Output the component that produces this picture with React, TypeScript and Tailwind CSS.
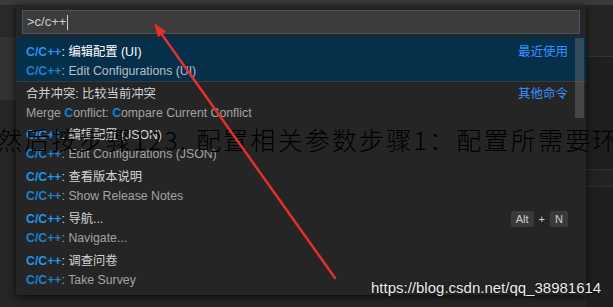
import React from "react";

type Seg = { t: string; hl?: boolean };

type Row = {
  main: Seg[];
  detail: Seg[];
  label?: string;
  keys?: string[];
  selected?: boolean;
  separator?: boolean;
};

const cpp = (rest: string): Seg[] => [{ t: "C/C++", hl: true }, { t: rest }];

const ROWS: Row[] = [
  { main: cpp(": 编辑配置 (UI)"), detail: cpp(": Edit Configurations (UI)"), label: "最近使用", selected: true },
  {
    main: [{ t: "合并冲突: 比较当前冲突" }],
    detail: [
      { t: "Merge " },
      { t: "C", hl: true },
      { t: "onflict: " },
      { t: "C", hl: true },
      { t: "ompare Current Conflict" },
    ],
    label: "其他命令",
    separator: true,
  },
  { main: cpp(": 编辑配置 (JSON)"), detail: cpp(": Edit Configurations (JSON)") },
  { main: cpp(": 查看版本说明"), detail: cpp(": Show Release Notes") },
  { main: cpp(": 导航..."), detail: cpp(": Navigate..."), keys: ["Alt", "N"] },
  { main: cpp(": 调查问卷"), detail: cpp(": Take Survey") },
];

function Line({ segs, className, hl }: { segs: Seg[]; className: string; hl: string }) {
  return (
    <div className={`leading-[19px] whitespace-nowrap ${className}`}>
      {segs.map((s, i) =>
        s.hl ? (
          <span key={i} className={`font-bold ${hl}`}>
            {s.t}
          </span>
        ) : (
          <span key={i}>{s.t}</span>
        )
      )}
    </div>
  );
}

function Item({ row, first }: { row: Row; first: boolean }) {
  return (
    <div
      className={`flex items-start justify-between pl-[10px] pr-[18px] ${
        first ? "h-[44px] pt-[6px]" : "h-[42px] pt-[3px]"
      } ${row.selected ? "bg-[#062f4a]" : ""} ${row.separator ? "border-t border-[#3a3a3a]" : ""}`}
    >
      <div className="flex flex-col text-[12.3px]">
        <Line
          segs={row.main}
          hl="text-[#1d97f0]"
          className={row.selected ? "text-white" : "text-[#d4d4d4]"}
        />
        <Line
          segs={row.detail}
          hl="text-[#1a82cc]"
          className={row.selected ? "text-[#b4bfc8]" : "text-[#a3a3a3]"}
        />
      </div>
      {row.label && <div className="text-[#3794ff] text-[12.5px] leading-[19px]">{row.label}</div>}
      {row.keys && (
        <div className="flex items-center gap-[5px] mt-[1px] text-[11px] text-[#cfcfcf]">
          <span className="bg-[#3a3a3a] px-[5px] leading-[16px] rounded-[2px]">{row.keys[0]}</span>
          <span>+</span>
          <span className="bg-[#3a3a3a] px-[5px] leading-[16px] rounded-[2px]">{row.keys[1]}</span>
        </div>
      )}
    </div>
  );
}

export default function App() {
  return (
    <div
      className="relative w-[613px] h-[307px] overflow-hidden bg-[#262626] flex flex-col"
      style={{ fontFamily: '"Liberation Sans", "Noto Sans CJK SC", sans-serif' }}
    >
      <div className="h-[5px] shrink-0 bg-[#3a3a3a]" />
      <div className="flex flex-1 min-h-0">
        {/* editor behind, left */}
        <div className="w-[16px] flex flex-col">
          <div className="h-[32px] bg-[#2a2a2a]" />
          <div className="h-[63px] bg-[#333333]" />
          <div className="flex-1 bg-[#262626]" />
        </div>

        {/* quick open */}
        <div className="relative z-10 w-[570px] h-[290px] bg-[#252526] shadow-[0_2px_8px_rgba(0,0,0,0.75)] flex flex-col">
          <div className="px-[6px] pt-[5px]">
            <div className="h-[24px] bg-[#3c3c3c] border border-[#3d566b] flex items-center pl-[4px] text-[13px] text-[#cccccc]">
              <span>&gt;c/c++</span>
              <span className="ml-[1px] w-px h-[15px] bg-[#d0d0d0]" />
            </div>
          </div>
          <div className="relative mt-[3px] flex flex-col">
            {ROWS.map((r, i) => (
              <Item key={i} row={r} first={i === 0} />
            ))}
            <div className="absolute right-[2px] top-[1px] w-[9px] h-[80px] bg-[rgba(121,121,121,0.4)]" />
          </div>
        </div>

        {/* editor behind, right */}
        <div className="flex-1 flex flex-col bg-[#1f1f1f]">
          <div className="h-[52px] bg-[#252525] border-b border-[#333]" />
          <div className="h-[112px]" />
          <div className="h-[18px] border-y border-[#303030] bg-[#222]" />
          <div className="flex-1" />
        </div>
      </div>

      {/* pasted watermark text */}
      <div
        className="absolute left-[-3px] top-[123px] z-20 whitespace-nowrap text-[25px] leading-[32px] tracking-[2.2px] font-light text-black"
        style={{ fontFamily: '"Noto Sans CJK SC", serif' }}
      >
        然后按步骤123. 配置相关参数步骤1：配置所需要环境
      </div>

      {/* red arrow */}
      <svg className="absolute inset-0 z-30 pointer-events-none" width="613" height="307">
        <line x1="335" y1="278" x2="158" y2="29" stroke="#e2302f" strokeWidth="2.5" strokeLinecap="round" />
        <polygon points="154,23 158,37.3 166.2,31.5" fill="#e2302f" />
      </svg>

      {/* site watermark */}
      <div
        className="absolute left-[371px] top-[279px] z-30 text-[15px] leading-[18px] text-[#ececec] [text-shadow:0_0_2px_rgba(0,0,0,0.9)]"
        style={{ fontFamily: '"Liberation Sans", Arial, sans-serif' }}
      >
        https://blog.csdn.net/qq_38981614
      </div>
    </div>
  );
}
